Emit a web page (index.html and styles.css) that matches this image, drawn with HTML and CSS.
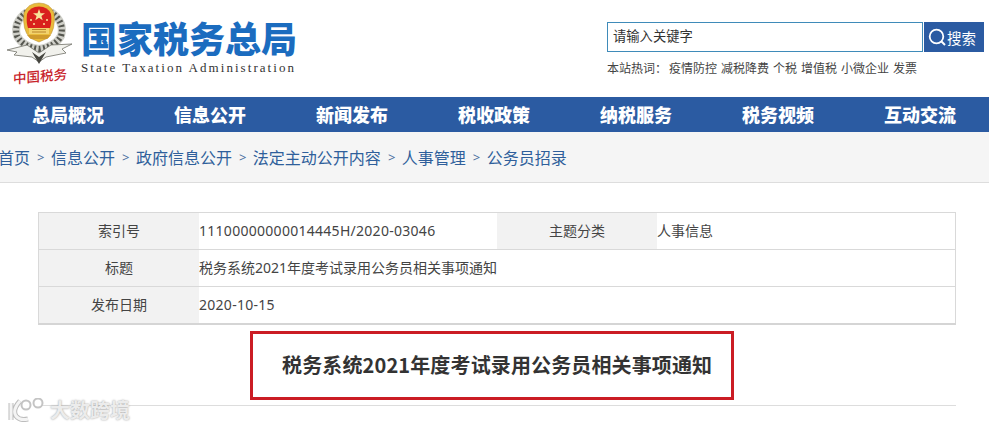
FILE: index.html
```html
<!DOCTYPE html>
<html>
	<head>
		<meta charset="utf-8">
		<link rel="stylesheet" href="styles.css">
		<title>国家税务总局</title>
	</head>
	<body>
		<!-- header -->
		<div class="header">
			<div class="emblem">
				<svg width="75" height="65" viewBox="6 2 75 65">
					<!-- wreath -->
					<path d="M27 12 Q13 22 17 36 Q23 47 39 49 Q55 47 61 36 Q65 22 51 12" fill="none" stroke="#cfcfc8" stroke-width="8"/>
					<path d="M27 12 Q13 22 17 36 Q23 47 39 49 Q55 47 61 36 Q65 22 51 12" fill="none" stroke="#55564f" stroke-width="6" stroke-dasharray="2 2.500"/>
					<!-- gold ring and red field -->
					<path d="M39 3 Q50 3 54 13 Q56 30 48 38 L39 42 L30 38 Q22 30 24 13 Q28 3 39 3 Z" fill="#e9bb3c" stroke="#b5882a" stroke-width=".5"/>
					<path d="M39 6.500 Q48 6.500 51 14 Q52 22 50 28 L28 28 Q26 22 27 14 Q30 6.500 39 6.500 Z" fill="#d9211d"/>
					<path d="M39 9 L40.500 13.200 L45 13.300 L41.400 16 L42.700 20.300 L39 17.800 L35.300 20.300 L36.600 16 L33 13.300 L37.500 13.200 Z" fill="#f8e59a"/>
					<circle cx="31" cy="20" r="1" fill="#f8e59a"/>
					<circle cx="47" cy="20" r="1" fill="#f8e59a"/>
					<circle cx="34" cy="24" r="1" fill="#f8e59a"/>
					<circle cx="44" cy="24" r="1" fill="#f8e59a"/>
					<!-- gate -->
					<path d="M29 28 H49 V34 H29 Z" fill="#f2d26c"/>
					<path d="M32 29.500 H46 M32 32 H46" stroke="#b9842a" stroke-width="1"/>
					<path d="M27 35 H51 L47 39 H31 Z" fill="#cf9a2c"/>
					<!-- ribbon -->
					<path d="M7 50 L27 45 L39 53 L51 45 L72 44 L62 49 L66 53 L46 57 L39 62 L32 57 L14 55 L17 52 Z" fill="#f1f1ec" stroke="#72726a" stroke-width=".8"/>
					<path d="M32 52 L39 57 L46 52 L39 64 Z" fill="#45453f"/>
				</svg>
				<div class="emblem_text">中国税务</div>
			</div>
			<div class="logo">
				<div class="logo_cn">国家税务总局</div>
				<div class="logo_en">State Taxation Administration</div>
			</div>
			<div class="search">
				<div class="search_row">
					<div class="search_input">请输入关键字</div>
					<div class="search_button">
						<svg width="20" height="20" viewBox="0 0 20 20">
							<circle cx="9.500" cy="9.500" r="6.800" fill="none" stroke="#fff" stroke-width="1.800"/>
							<path d="M14.500 14.500 L18 18" stroke="#fff" stroke-width="2"/>
						</svg>
						搜索
					</div>
				</div>
				<div class="hot">
					<span>本站热词：</span>
					<a>疫情防控</a>
					<a>减税降费</a>
					<a>个税</a>
					<a>增值税</a>
					<a>小微企业</a>
					<a>发票</a>
				</div>
			</div>
		</div>

		<!-- nav -->
		<div class="nav">
			<a>总局概况</a>
			<a>信息公开</a>
			<a>新闻发布</a>
			<a>税收政策</a>
			<a>纳税服务</a>
			<a>税务视频</a>
			<a>互动交流</a>
		</div>

		<div class="crumbs">
			<a>首页</a><i>&gt;</i><a>信息公开</a><i>&gt;</i><a>政府信息公开</a><i>&gt;</i><a>法定主动公开内容</a><i>&gt;</i><a>人事管理</a><i>&gt;</i><a>公务员招录</a>
		</div>

		<div class="content">
			<table class="info">
				<tr>
					<td class="label">索引号</td>
					<td class="value num">11100000000014445H/2020-03046</td>
					<td class="label">主题分类</td>
					<td class="value">人事信息</td>
				</tr>
				<tr>
					<td class="label">标题</td>
					<td class="value" colspan="3">税务系统2021年度考试录用公务员相关事项通知</td>
				</tr>
				<tr>
					<td class="label">发布日期</td>
					<td class="value num" colspan="3">2020-10-15</td>
				</tr>
			</table>
			<h1 class="title">税务系统2021年度考试录用公务员相关事项通知</h1>
			<div class="rule"></div>
		</div>

		<!-- watermark -->
		<div class="watermark">
			<svg width="42" height="24" viewBox="0 0 42 24">
				<path d="M3 5 V22 M12 3 Q4 12 8 18 Q12 23 20 21" fill="none" stroke="#bdbdbd" stroke-width="5"/>
				<path d="M3 5 V22 M12 3 Q4 12 8 18 Q12 23 20 21" fill="none" stroke="#f4f4f4" stroke-width="3"/>
				<circle cx="18" cy="7" r="4.500" fill="#fff" stroke="#c4c4c4" stroke-width="2"/>
				<circle cx="30" cy="5" r="4.500" fill="#fff" stroke="#c4c4c4" stroke-width="2"/>
			</svg>
			<span>大数跨境</span>
		</div>
	</body>
</html>
```

FILE: styles.css
```css
html, body {
	margin: 0;
	padding: 0;
	background: #fff;
	overflow: hidden;
}
body {
	width: 989px;
	height: 429px;
	position: relative;
	font-family: "Noto Sans", "Noto Sans CJK SC", sans-serif;
	color: #333;
}
a {
	text-decoration: none;
}

/* header */
.header {
	display: flex;
	height: 97px;
	box-sizing: border-box;
	padding: 2px 0 0 6px;
}
.emblem {
	width: 75px;
}
.emblem svg {
	display: block;
}
.emblem_text {
	padding-left: 7px;
	font-size: 13.500px;
	line-height: 16px;
	font-weight: 500;
	color: #c8242b;
	font-family: "Noto Sans CJK SC", sans-serif;
	transform: skewY(-5deg);
}
.logo {
	width: 526px;
	padding-top: 15px;
}
.logo_cn {
	font-family: "Noto Sans CJK SC", sans-serif;
	font-size: 36px;
	line-height: 40px;
	font-weight: 900;
	color: #1b6cbf;
}
.logo_en {
	font-family: "Liberation Serif", serif;
	font-size: 13px;
	line-height: 16px;
	margin-top: 3px;
	letter-spacing: 2.050px;
	color: #333;
}
.search {
	padding-top: 20px;
}
.search_row {
	display: flex;
	height: 30px;
}
.search_input {
	width: 316px;
	box-sizing: border-box;
	border: 1px solid #3f8bb9;
	padding-left: 5px;
	font-size: 13.300px;
	line-height: 26px;
	color: #333;
}
.search_button {
	width: 60px;
	box-sizing: border-box;
	padding-left: 3px;
	margin-left: 1px;
	display: flex;
	align-items: center;
	background: #2b5ba2;
	color: #fff;
	font-size: 14.500px;
}
.hot {
	display: flex;
	gap: 4px;
	margin-top: 9px;
	font-size: 12px;
	line-height: 16px;
	color: #444;
}
.hot span {
	width: 58px;
	white-space: nowrap;
}

/* nav */
.nav {
	display: flex;
	height: 35px;
	background: #2b5ba2;
}
.nav a {
	width: 142px;
	flex: none;
	text-align: center;
	color: #fff;
	font-size: 18px;
	font-weight: 900;
	line-height: 35px;
	font-family: "Noto Sans CJK SC", sans-serif;
}
.nav a:first-child {
	margin-left: -3px;
}

.crumbs {
	height: 51px;
	box-sizing: border-box;
	display: flex;
	align-items: center;
	background: #f5f5f5;
	border-bottom: 1px solid #ddd;
	font-size: 16px;
	color: #2f5f9b;
}
.crumbs a:first-child {
	margin-left: -2px;
}
.crumbs i {
	font-style: normal;
	font-size: 13px;
	margin: 0 6.500px 0 7px;
	color: #4a6f9f;
}

/* content */
.content {
	padding: 29px 33px 0 38px;
}
.info {
	width: 918px;
	box-sizing: border-box;
	border-collapse: collapse;
	table-layout: fixed;
	border: 1px solid #d9d9d9;
	border-bottom: 2px solid #d5d5d5;
	font-size: 14px;
	color: #444;
}
.info td {
	height: 34px;
	padding: 0 0 2px;
	border-top: 1px solid #d9d9d9;
}
.info .label {
	width: 160px;
	background: #f2f2f2;
	text-align: center;
}
.info .value {
	width: 298px;
}
.info .num {
	letter-spacing: .280px;
}
.title {
	width: 484px;
	height: 69px;
	box-sizing: border-box;
	margin: 6px 0 0 212px;
	padding-left: 29px;
	border: 3px solid #cb1c24;
	font-size: 20px;
	letter-spacing: .130px;
	line-height: 61px;
	font-weight: bold;
	color: #333;
	font-family: "Noto Sans CJK SC", sans-serif;
}
.rule {
	height: 1px;
	margin-top: 5px;
	background: #ddd;
}

/* watermark over the page corner */
.watermark {
	position: absolute;
	left: 8px;
	top: 397px;
	display: flex;
	align-items: center;
	font-family: "Noto Sans CJK SC", sans-serif;
	font-size: 20px;
	font-weight: bold;
	line-height: 26px;
	color: #ececec;
	text-shadow: 0 0 2px #999;
}
```
